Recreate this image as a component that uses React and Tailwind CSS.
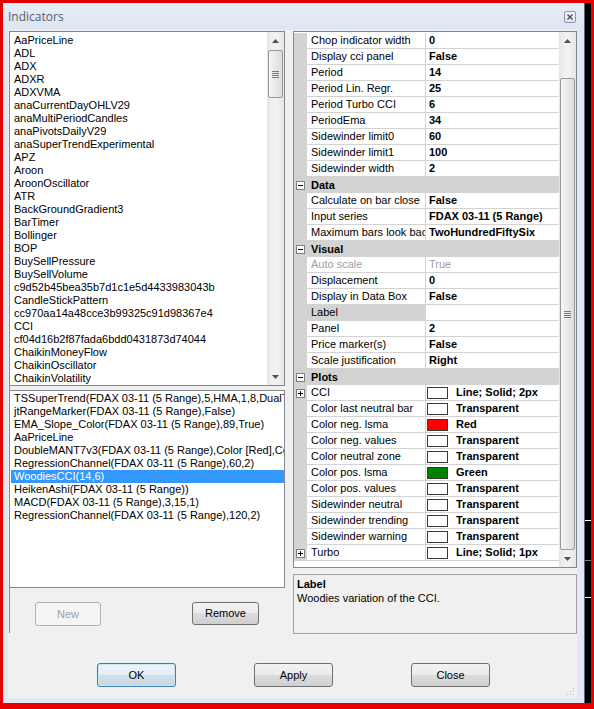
import React from 'react';

const indicators = [
  'AaPriceLine', 'ADL', 'ADX', 'ADXR', 'ADXVMA', 'anaCurrentDayOHLV29', 'anaMultiPeriodCandles',
  'anaPivotsDailyV29', 'anaSuperTrendExperimental', 'APZ', 'Aroon', 'AroonOscillator', 'ATR',
  'BackGroundGradient3', 'BarTimer', 'Bollinger', 'BOP', 'BuySellPressure', 'BuySellVolume',
  'c9d52b45bea35b7d1c1e5d4433983043b', 'CandleStickPattern', 'cc970aa14a48cce3b99325c91d98367e4',
  'CCI', 'cf04d16b2f87fada6bdd0431873d74044', 'ChaikinMoneyFlow', 'ChaikinOscillator', 'ChaikinVolatility',
];

const applied = [
  'TSSuperTrend(FDAX 03-11 (5 Range),5,HMA,1,8,DualThrust,False)',
  'jtRangeMarker(FDAX 03-11 (5 Range),False)',
  'EMA_Slope_Color(FDAX 03-11 (5 Range),89,True)',
  'AaPriceLine',
  'DoubleMANT7v3(FDAX 03-11 (5 Range),Color [Red],Color [Green])',
  'RegressionChannel(FDAX 03-11 (5 Range),60,2)',
  'WoodiesCCI(14,6)',
  'HeikenAshi(FDAX 03-11 (5 Range))',
  'MACD(FDAX 03-11 (5 Range),3,15,1)',
  'RegressionChannel(FDAX 03-11 (5 Range),120,2)',
];

// kind: row | cat | color
const props = [
  { name: 'Chop indicator width', value: '0' },
  { name: 'Display cci panel', value: 'False' },
  { name: 'Period', value: '14' },
  { name: 'Period Lin. Regr.', value: '25' },
  { name: 'Period Turbo CCI', value: '6' },
  { name: 'PeriodEma', value: '34' },
  { name: 'Sidewinder limit0', value: '60' },
  { name: 'Sidewinder limit1', value: '100' },
  { name: 'Sidewinder width', value: '2' },
  { cat: 'Data' },
  { name: 'Calculate on bar close', value: 'False' },
  { name: 'Input series', value: 'FDAX 03-11 (5 Range)' },
  { name: 'Maximum bars look back', value: 'TwoHundredFiftySix' },
  { cat: 'Visual' },
  { name: 'Auto scale', value: 'True', disabled: true },
  { name: 'Displacement', value: '0' },
  { name: 'Display in Data Box', value: 'False' },
  { name: 'Label', value: '', selected: true },
  { name: 'Panel', value: '2' },
  { name: 'Price marker(s)', value: 'False' },
  { name: 'Scale justification', value: 'Right' },
  { cat: 'Plots' },
  { name: 'CCI', value: 'Line; Solid; 2px', swatch: 'white', expand: true },
  { name: 'Color last neutral bar', value: 'Transparent', swatch: 'white' },
  { name: 'Color neg. lsma', value: 'Red', swatch: 'red' },
  { name: 'Color neg. values', value: 'Transparent', swatch: 'white' },
  { name: 'Color neutral zone', value: 'Transparent', swatch: 'white' },
  { name: 'Color pos. lsma', value: 'Green', swatch: 'green' },
  { name: 'Color pos. values', value: 'Transparent', swatch: 'white' },
  { name: 'Sidewinder neutral', value: 'Transparent', swatch: 'white' },
  { name: 'Sidewinder trending', value: 'Transparent', swatch: 'white' },
  { name: 'Sidewinder warning', value: 'Transparent', swatch: 'white' },
  { name: 'Turbo', value: 'Line; Solid; 1px', swatch: 'white', expand: true },
];

const swatchBg = {
  white: 'bg-white',
  red: 'bg-[#ff0000]',
  green: 'bg-[#008000]',
};

const Arrow = ({ down }) => (
  <svg width="7" height="4" viewBox="0 0 7 4">
    {down ? <polygon points="0,0 7,0 3.5,4" fill="#505050" /> : <polygon points="0,4 7,4 3.5,0" fill="#505050" />}
  </svg>
);

const Thumb = ({ className }) => (
  <div className={`mx-[1px] rounded-[2px] border border-[#979797] bg-[linear-gradient(90deg,#f6f6f6,#e9e9e9_50%,#dcdcdc)] flex items-center justify-center ${className}`}>
    <div className="flex flex-col gap-[1px]">
      <div className="w-[7px] h-[1px] bg-[#7a7a7a]" />
      <div className="w-[7px] h-[1px] bg-[#7a7a7a]" />
      <div className="w-[7px] h-[1px] bg-[#7a7a7a]" />
      <div className="w-[7px] h-[1px] bg-[#7a7a7a]" />
    </div>
  </div>
);

// Win7 style vertical scrollbar; spacer/thumb heights are passed as full class names
const ScrollBar = ({ spacer, thumb }) => (
  <div className="w-[17px] shrink-0 flex flex-col bg-[linear-gradient(90deg,#e6e6e6,#f2f2f2_40%,#f2f2f2_60%,#e6e6e6)]">
    <div className="h-[17px] flex items-center justify-center shrink-0"><Arrow /></div>
    <div className={`shrink-0 ${spacer}`} />
    <Thumb className={`shrink-0 ${thumb}`} />
    <div className="flex-1" />
    <div className="h-[17px] flex items-center justify-center shrink-0"><Arrow down /></div>
  </div>
);

const PlusMinus = ({ plus }) => (
  <div className="w-[9px] h-[9px] border border-[#808080] bg-white flex items-center justify-center relative">
    <div className="w-[5px] h-[1px] bg-black" />
    {plus && <div className="absolute w-[1px] h-[5px] bg-black" />}
  </div>
);

const PropRow = ({ p }) => {
  if (p.cat) {
    return (
      <div className="h-[16px] flex bg-[#d3d3d3]">
        <div className="w-[13px] shrink-0 flex items-center pl-[2px]"><PlusMinus /></div>
        <div className="pl-[4px] leading-[16px] font-bold">{p.cat}</div>
      </div>
    );
  }
  const textColor = p.disabled ? 'text-[#a0a0a0]' : 'text-black';
  return (
    <div className="h-[16px] flex">
      <div className="w-[13px] shrink-0 bg-[#d3d3d3] flex items-center pl-[2px]">
        {p.expand && <PlusMinus plus />}
      </div>
      <div className={`w-[119px] shrink-0 border-r border-b border-[#d3d3d3] pl-[4px] leading-[15px] whitespace-nowrap overflow-hidden ${textColor} ${p.selected ? 'bg-[#d3d3d3]' : 'bg-white'}`}>
        {p.name}
      </div>
      <div className={`flex-1 flex items-center border-b border-[#d3d3d3] bg-white whitespace-nowrap overflow-hidden ${textColor}`}>
        {p.swatch ? (
          <>
            <div className={`ml-[1px] w-[21px] h-[12px] shrink-0 border border-[#3a3a3a] ${swatchBg[p.swatch]}`} />
            <span className="ml-[8px] font-bold leading-[15px]">{p.value}</span>
          </>
        ) : (
          <span className={`pl-[3px] leading-[15px] ${p.disabled ? '' : 'font-bold'}`}>{p.value}</span>
        )}
      </div>
    </div>
  );
};

const Button = ({ children, className, variant }) => {
  const look =
    variant === 'disabled'
      ? 'border-[#adb2b5] bg-[#f4f4f4] text-[#a0a0a0]'
      : variant === 'default'
      ? 'border-[#3c7fb1] bg-[linear-gradient(#eef5fa,#e3edf4_50%,#d3e0ea_50%,#c6d6e2)] text-black shadow-[inset_0_0_0_1px_#c8e6f7]'
      : 'border-[#707070] bg-[linear-gradient(#f2f2f2,#ebebeb_50%,#dddddd_50%,#cfcfcf)] text-black';
  return (
    <div className={`rounded-[3px] border flex items-center justify-center shrink-0 ${look} ${className}`}>
      {children}
    </div>
  );
};

export default function App() {
  return (
    <div className="w-[594px] h-[709px] overflow-hidden bg-[#e80000] pt-[3px] px-[3px] pb-[6px] flex font-['Liberation_Sans',Arial,sans-serif] text-[11px] text-black">
      {/* window */}
      <div className="w-[582px] h-full flex flex-col bg-[#e2e9f3] border-r border-[#5d6876]">
        {/* title bar */}
        <div className="h-[27px] shrink-0 flex items-center justify-between pl-[5px] pr-[8px] bg-[linear-gradient(#e6edf6,#dde6f1)]">
          <span className="font-['Open_Sans','Noto_Sans',sans-serif] text-[12px] text-[#56606c]">Indicators</span>
          <div className="w-[12px] h-[12px] rounded-[2px] border border-[#8796ab] bg-[linear-gradient(#f7f9fc,#dfe6ef)] flex items-center justify-center">
            <svg width="6" height="6" viewBox="0 0 6 6">
              <path d="M0.5 0.5 L5.5 5.5 M5.5 0.5 L0.5 5.5" stroke="#4a4f57" strokeWidth="1.4" />
            </svg>
          </div>
        </div>

        {/* client area */}
        <div className="h-[668px] ml-[5px] w-[569px] shrink-0 bg-[#f0f0f0] flex flex-col">
          <div className="mt-[1px] ml-[1px] h-[602px] flex shrink-0">
            {/* left panel */}
            <div className="w-[276px] shrink-0 flex flex-col border-l border-[#828790]">
              <div className="h-[355px] shrink-0 flex bg-white border-y border-r border-[#828790]">
                <div className="flex-1 pt-[2px] pl-[4px] overflow-hidden">
                  {indicators.map((n) => (
                    <div key={n} className="h-[13px] leading-[13px] whitespace-nowrap">{n}</div>
                  ))}
                </div>
                <ScrollBar spacer="h-[1px]" thumb="h-[48px]" />
              </div>

              <div className="mt-[4px] h-[198px] shrink-0 bg-white border-y border-r border-[#828790] pt-[1px] pl-[1px] overflow-hidden">
                {applied.map((n, i) => (
                  <div
                    key={n + i}
                    className={`h-[13px] leading-[13px] pl-[3px] whitespace-nowrap overflow-hidden ${n === 'WoodiesCCI(14,6)' ? 'bg-[#3399ff] text-white' : ''}`}
                  >
                    {n}
                  </div>
                ))}
              </div>

              <div className="mt-[14px] ml-[25px] flex gap-[91px]">
                <Button variant="disabled" className="w-[66px] h-[24px]">New</Button>
                <Button className="w-[67px] h-[23px]">Remove</Button>
              </div>
            </div>

            {/* right panel */}
            <div className="ml-[8px] w-[284px] shrink-0 flex flex-col">
              <div className="h-[537px] shrink-0 flex border border-[#828790] bg-white">
                <div className="w-[265px] shrink-0 pt-[1px] overflow-hidden">
                  {props.map((p, i) => (
                    <PropRow key={i} p={p} />
                  ))}
                </div>
                <ScrollBar spacer="h-[29px]" thumb="h-[472px]" />
              </div>
              <div className="mt-[6px] h-[60px] shrink-0 border border-[#a0a0a0] px-[3px] pt-[3px]">
                <div className="font-bold leading-[13px]">Label</div>
                <div className="leading-[13px] mt-[1px]">Woodies variation of the CCI.</div>
              </div>
            </div>
          </div>

          {/* dialog buttons */}
          <div className="mt-[30px] pl-[89px] flex gap-[78px]">
            <Button variant="default" className="w-[79px] h-[24px]">OK</Button>
            <Button className="w-[79px] h-[24px]">Apply</Button>
            <Button className="w-[79px] h-[24px]">Close</Button>
          </div>

          <div className="flex-1 flex justify-end items-end pr-[2px] pb-[2px]">
            <svg width="8" height="8" viewBox="0 0 8 8">
              <rect x="6" y="0" width="1" height="1" fill="#b8b8b8" />
              <rect x="3" y="3" width="1" height="1" fill="#b8b8b8" />
              <rect x="6" y="3" width="1" height="1" fill="#b8b8b8" />
              <rect x="0" y="6" width="1" height="1" fill="#b8b8b8" />
              <rect x="3" y="6" width="1" height="1" fill="#b8b8b8" />
              <rect x="6" y="6" width="1" height="1" fill="#b8b8b8" />
            </svg>
          </div>
        </div>
      </div>

      {/* chart behind the window */}
      <div className="w-[6px] h-full bg-black flex flex-col">
        <div className="mt-[517px] h-[1px] bg-white" />
        <div className="mt-[39px] h-[1px] bg-[#808080]" />
        <div className="mt-[36px] h-[1px] bg-white" />
      </div>
    </div>
  );
}
